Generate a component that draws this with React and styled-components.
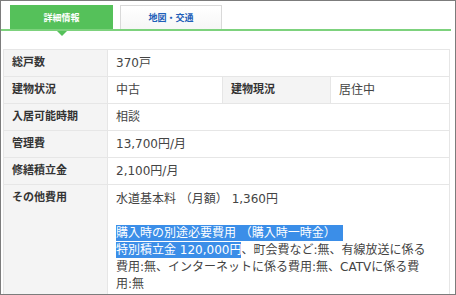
import React from 'react';
import styled, { createGlobalStyle } from 'styled-components';

const GlobalStyle = createGlobalStyle`
  html, body {
    margin: 0;
    padding: 0;
    background: #ffffff;
  }
  body {
    font-family: "DejaVu Sans", "Noto Sans CJK JP", sans-serif;
  }
`;

const Frame = styled.div`
  width: 456px;
  height: 295px;
  box-sizing: border-box;
  border: 1px solid #7c7c7c;
  overflow: hidden;
  background: #ffffff;
`;

const TabBar = styled.div`
  display: flex;
  align-items: flex-end;
  gap: 7px;
  padding: 4px 0 0 9px;
  margin-right: 4px;
  border-bottom: 2px solid #7dd27d;
`;

const Tab = styled.div`
  position: relative;
  width: ${(p) => (p.$active ? '103px' : '102px')};
  height: 24px;
  box-sizing: border-box;
  display: flex;
  align-items: center;
  justify-content: center;
  font-size: 9px;
  font-weight: bold;
  color: ${(p) => (p.$active ? '#ffffff' : '#1f5fb8')};
  background: ${(p) => (p.$active ? '#55c15a' : 'linear-gradient(#ffffff, #f6f6f6)')};
  border: ${(p) => (p.$active ? 'none' : '1px solid #d9d9d9')};
  border-bottom: none;

  &::after {
    content: '';
    display: ${(p) => (p.$active ? 'block' : 'none')};
    position: absolute;
    left: 50%;
    top: calc(100% + 2px);
    margin-left: -5px;
    border-left: 5px solid transparent;
    border-right: 5px solid transparent;
    border-top: 5px solid #55c15a;
  }
`;

const TableWrap = styled.div`
  margin: 18px 5px 0 2px;
`;

const Table = styled.table`
  width: 446px;
  table-layout: fixed;
  border-collapse: collapse;
  border: 1px solid #dedede;
`;

const Label = styled.th`
  background: #f4f4f4;
  border: 1px solid #e6e6e6;
  padding: 5px 8px 5px 8px;
  text-align: left;
  vertical-align: top;
  font-size: 11px;
  line-height: 16px;
  font-weight: bold;
  color: #333333;
`;

const Value = styled.td`
  border: 1px solid #e6e6e6;
  padding: 5px 8px 5px 8px;
  vertical-align: top;
  font-size: 12px;
  line-height: 16px;
  color: #444444;
`;

const Note = styled.div`
  max-width: 310px;
  line-height: 17px;
  padding-top: 1px;
`;

const Selected = styled.span`
  background: #3b8ee8;
  color: #ffffff;
  padding: 1px 0 1px;
`;

const rows = [
  ['総戸数', '370戸'],
  ['入居可能時期', '相談'],
  ['管理費', '13,700円/月'],
  ['修繕積立金', '2,100円/月'],
];

export default function App() {
  return (
    <>
      <GlobalStyle />
      <Frame>
        <TabBar>
          <Tab $active>詳細情報</Tab>
          <Tab>地図・交通</Tab>
        </TabBar>
        <TableWrap>
          <Table>
            <colgroup>
              <col style={{ width: 104 }} />
              <col style={{ width: 115 }} />
              <col style={{ width: 108 }} />
              <col style={{ width: 119 }} />
            </colgroup>
            <tbody>
              <tr>
                <Label>{rows[0][0]}</Label>
                <Value colSpan={3}>{rows[0][1]}</Value>
              </tr>
              <tr>
                <Label>建物状況</Label>
                <Value>中古</Value>
                <Label>建物現況</Label>
                <Value>居住中</Value>
              </tr>
              {rows.slice(1).map(([k, v]) => (
                <tr key={k}>
                  <Label>{k}</Label>
                  <Value colSpan={3}>{v}</Value>
                </tr>
              ))}
              <tr>
                <Label>その他費用</Label>
                <Value colSpan={3}>
                  <Note>
                    水道基本料 （月額） 1,360円
                    <br />
                    <br />
                    <Selected>購入時の別途必要費用 （購入時一時金）{'\u00a0\u00a0'}</Selected>
                    <br />
                    <Selected>特別積立金 120,000円</Selected>
                    、町会費など:無、有線放送に係る費用:無、インターネットに係る費用:無、CATVに係る費用:無
                  </Note>
                </Value>
              </tr>
            </tbody>
          </Table>
        </TableWrap>
      </Frame>
    </>
  );
}
